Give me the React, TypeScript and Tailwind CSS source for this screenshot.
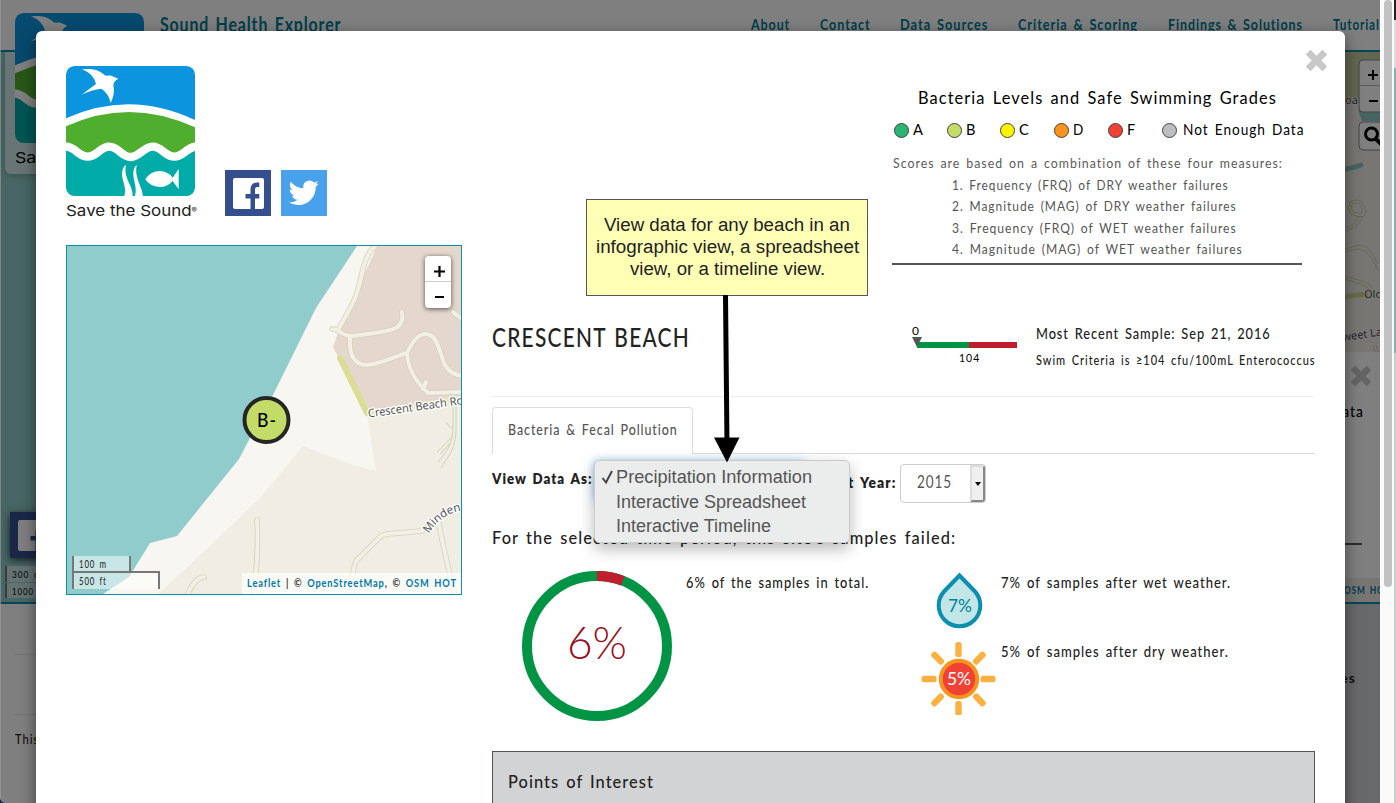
import { useLayoutEffect, useRef, type ReactNode } from "react";

const MAIN = "font-['Lato',sans-serif] tracking-[0.07em] [word-spacing:0.13em]";

/* One line of text, condensed or widened so that it fills its box. */
function Fit({ className, children }: { className: string; children: ReactNode }) {
  const outer = useRef<HTMLSpanElement>(null);
  const inner = useRef<HTMLSpanElement>(null);
  useLayoutEffect(() => {
    const o = outer.current;
    const i = inner.current;
    if (!o || !i || !i.offsetWidth) return;
    i.style.transform = `scaleX(${o.clientWidth / i.offsetWidth})`;
  }, []);
  return (
    <span ref={outer} className={`block shrink-0 whitespace-nowrap ${className}`}>
      <span ref={inner} className="inline-block origin-left">{children}</span>
    </span>
  );
}

const WAVE = "M-65 272C-38 272-27 242 0 242S38 272 65 272S103 242 130 242S167 273 194 273S233 242 260 242S298 272 325 272S363 242 390 242";

function Logo() {
  return (
    <svg className="block h-[130px] w-[129px]" viewBox="0 0 387 390">
      <defs>
        <clipPath id="badge"><rect width="387" height="390" rx="26" /></clipPath>
      </defs>
      <g clipPath="url(#badge)">
        <rect width="387" height="390" fill="#fff" />
        <path d="M0 0H387V162Q192 70 0 157Z" fill="#0d94de" />
        <path d="M0 181Q190 93 387 184V272H0Z" fill="#50ae2e" />
        <path d={`${WAVE}V390H-65Z`} fill="#00aba8" />
        <path d={WAVE} fill="none" stroke="#fff" strokeWidth="25" />
        <path d="M48 10Q90 6 109 22Q119 33 131 28L138 30L157 38Q143 44 142 58Q148 82 134 111Q128 82 106 68Q77 71 47 86Q66 72 90 54Q84 24 48 10Z" fill="#fff" />
        <path d="M180 296Q168 304 168 325C168 345 183 365 175 390H200C202 358 171 337 180 296ZM212 296Q201 306 202 326C203 346 214 365 207 390H231C229 360 204 337 212 296Z" fill="#fff" />
        <path d="M238 340Q253 315 284 315Q308 318 320 335L338 309V370L320 345Q304 363 282 363Q250 361 238 340Z" fill="#fff" />
      </g>
    </svg>
  );
}

function Facebook() {
  return (
    <svg className="block size-[46px]" viewBox="0 0 46 46">
      <path d="M0 0H46V46H0Z" fill="#354f8e" />
      <rect x="8" y="8" width="31" height="31" rx="2" fill="#fff" />
      <path d="M25.500 39V28.500H20.500V24H25.500V20C25.500 15 28 12.500 32 12.500H34.300V17H32.500C30.700 17 30 18 30 20V24H34.300V28.500H30V39Z" fill="#354f8e" />
    </svg>
  );
}

function Twitter() {
  return (
    <svg className="block size-[46px]" viewBox="0 0 46 46">
      <path d="M0 0H46V46H0Z" fill="#4aa1eb" />
      <path transform="translate(7.600 7.700) scale(1.260)" fill="#fff" d="M23.950 4.570a10 10 0 0 1-2.820.77 4.960 4.960 0 0 0 2.160-2.720 9.900 9.900 0 0 1-3.130 1.190 4.920 4.920 0 0 0-8.380 4.480A13.940 13.940 0 0 1 1.640 3.160a4.920 4.920 0 0 0 1.520 6.570 4.900 4.900 0 0 1-2.230-.61v.06a4.920 4.920 0 0 0 3.950 4.830 5 5 0 0 1-2.210.08 4.940 4.940 0 0 0 4.600 3.420A9.870 9.870 0 0 1 0 19.540a14 14 0 0 0 7.550 2.210c9.050 0 14-7.500 14-13.980l-.02-.64a9.900 9.900 0 0 0 2.420-2.560z" />
    </svg>
  );
}

const ROADS = [
  "M308 0C293 14 297 34 286 57L271 84",
  "M265 83L271 84Q276 90 286 90C303 87 318 87 329 82Q337 77 335 66",
  "M283 91C282 107 286 119 300 119C316 118 330 109 340 107C346 94 353 87 360 88C370 90 371 101 375 111C378 124 386 129 396 130",
  "M340 107C341 124 350 137 361 147L396 146M359 136L356 143",
  "M386 66L396 74",
  "M190 274Q192 300 187 350M137 331Q127 332 120 350",
  "M396 262L373 270L358 283L355 285L320 288Q314 289 310 294L290 314Q285 320 285 350M371 274Q376 300 388 350",
];

const LANES = "M386 160V184Q385 198 378 207L371 216M389 160V186Q388 202 381 211L374 222M386 190L370 206M384 196L373 208M379 176Q382 182 386 182";

function MapDrawing() {
  return (
    <svg className="block h-[348px] w-[394px]" viewBox="0 0 394 348">
      <defs><path id="minden" d="M362 288Q374 267 398 264" /></defs>
      <rect width="394" height="348" fill="#f7f6f1" />
      <path d="M236 200L286 219L309 225L300 167L394 145V348H91L141 302L195 250Z" fill="#efede4" />
      <path d="M310 0L295 34L272 84L266 101L300 169L394 150V0Z" fill="#e3d7ce" />
      <path d="M0 0H290L249 62L205 151L183 192L172 213L110 290L83 297L62 331L36 348H0Z" fill="#90cccb" />
      <path d="M300 168L394 152" stroke="#e6e6bb" strokeWidth="5" />
      <path d={LANES} fill="none" stroke="#d6d1b5" />
      {ROADS.map((d) => <path key={d} d={d} fill="none" stroke="#d6d1b5" strokeWidth="5.500" strokeLinecap="round" />)}
      {ROADS.map((d) => <path key={d} d={d} fill="none" stroke="#f1efe6" strokeWidth="4" strokeLinecap="round" />)}
      <path d="M273 112L300 167" stroke="#dade94" strokeWidth="6" strokeLinecap="round" />
      <g className="tracking-normal [word-spacing:0]" fontFamily="Noto Sans, sans-serif" fontSize="11.500" fill="#555" stroke="#fff" strokeWidth="2.500" paintOrder="stroke">
        <text transform="translate(301.500 171.500) rotate(-8)" textLength="96" lengthAdjust="spacingAndGlyphs">Crescent Beach Ro</text>
        <text><textPath href="#minden">Minden</textPath></text>
      </g>
      <circle cx="199.500" cy="174" r="22" fill="#c2dc67" stroke="#252525" strokeWidth="4" />
      <text x="190" y="181" textLength="20" lengthAdjust="spacingAndGlyphs" fontFamily="Lato, sans-serif" fontSize="20" fontWeight="500">B-</text>
    </svg>
  );
}

function Zoomer() {
  return (
    <div className="w-[26px] overflow-hidden rounded bg-white shadow-[0_1px_5px_rgba(0,0,0,0.65)]">
      <svg className="block" width="26" height="52" viewBox="0 0 26 52">
        <path d="M0 25.500H26" stroke="#ccc" />
        <path d="M9 15.500H20M14.500 10V21M10 41H19" stroke="#000" strokeWidth="2.200" />
      </svg>
    </div>
  );
}

function Cross({ className }: { className: string }) {
  return (
    <svg className={className} viewBox="0 0 22 22">
      <path d="M3 3L19 19M19 3L3 19" stroke="#c8c8c8" strokeWidth="6.500" />
    </svg>
  );
}

const NAV = [
  { label: "About", box: "w-[39px] mr-[30px]" },
  { label: "Contact", box: "w-[51px] mr-[29px]" },
  { label: "Data Sources", box: "w-[88px] mr-[30px]" },
  { label: "Criteria & Scoring", box: "w-[120px] mr-[30px]" },
  { label: "Findings & Solutions", box: "w-[135px] mr-[30px]" },
  { label: "Tutorials", box: "w-[53px]" },
];

function PageBehind() {
  return (
    <div className={`flex h-[803px] w-[1380px] flex-col overflow-hidden bg-white text-[#222] ${MAIN}`}>
      <header className="flex h-[52px] shrink-0 border-b-2 border-[#0c8fae] pl-[160px] pt-[11px] font-bold text-[#007c96]">
        <Fit className="w-[181px] text-[20px] leading-[27px]">Sound Health Explorer</Fit>
        <nav className="ml-[410px] flex text-[15px] leading-[27px]">
          {NAV.map((n) => <Fit key={n.label} className={n.box}>{n.label}</Fit>)}
        </nav>
      </header>
      <div className="flex h-[552px] shrink-0 justify-between border-b-2 border-[#0c8fae] bg-[#90cccb]">
        <div className="flex w-20 flex-col justify-end">
          <div className="ml-2.5 w-[46px] shadow-[0_2px_8px_rgba(0,0,0,0.7)]"><Facebook /></div>
          <div className="mb-1 ml-[5px] mt-2 w-[70px] text-[10px] font-medium">
            <div className="h-4 border-l-2 border-[#777] bg-white/50 pl-[5px] leading-4"><Fit className="w-[30px]">300 m</Fit></div>
            <div className="mt-px h-[15px] border-l-2 border-[#777] bg-white/50 pl-[5px] leading-4"><Fit className="w-[34px]">1000 ft</Fit></div>
          </div>
        </div>
        <div className="flex w-[40px] flex-col overflow-hidden bg-[#efede4]">
          <svg className="block h-[300px] w-[40px] shrink-0" viewBox="1340 52 40 300">
            <path d="M1340 52H1380V102H1340Z" fill="#c7cfa3" />
            <path d="M1358 110H1380V121H1362Z" fill="#8cc9c8" />
            <path d="M1340 170Q1354 168 1361 165" fill="none" stroke="#8cc9c8" strokeWidth="5" strokeLinecap="round" />
            <g fill="none" stroke="#d0ccad"><path d="M1350 202Q1360 197 1363 204Q1368 212 1364 216Q1355 218 1350 213Q1347 207 1350 202ZM1352 204Q1359 201 1361 206Q1364 213 1361 213Q1352 214 1351 208ZM1359 217Q1354 228 1340 228M1363 217Q1356 231 1340 232" /><path d="M1340 252C1365 240 1368 245 1378 264M1340 255C1362 244 1366 250 1376 265Q1376 272 1384 272M1340 275C1363 282 1367 280 1374 290M1340 278Q1366 284 1370 290" /></g>
            <path d="M1340 297L1368 294" stroke="#d3d88a" strokeWidth="5" />
            <g className="tracking-normal [word-spacing:0]" fontFamily="Noto Sans, sans-serif" fontSize="11" fill="#444" stroke="#fff" strokeWidth="1.500" paintOrder="stroke">
              <text x="1345" y="104">oa</text><text x="1364" y="298">Old</text>
              <text transform="translate(1343 341) rotate(-8)">weet La</text>
            </g>
            <path d="M1376 345L1378 352M1373 345L1375 352" stroke="#d0ccad" />
            <g><rect x="1359" y="60" width="26" height="52" rx="4" fill="#fff" stroke="#888" /><path d="M1359 85.500H1380" stroke="#bbb" /><path d="M1368 75H1378M1373 70V80M1369 101H1378" stroke="#000" strokeWidth="2" /></g>
            <g><rect x="1359" y="122" width="26" height="28" rx="4" fill="#fff" stroke="#888" /><circle cx="1371.500" cy="134" r="6" fill="none" stroke="#000" strokeWidth="3" /><path d="M1375.500 138.500L1382 145" stroke="#000" strokeWidth="4" /></g>
          </svg>
          <div className="h-[226px] shrink-0 bg-white pl-[10px] pt-[13px]">
            <Cross className="block size-[22px]" />
            <div className="-ml-[19px] mt-[14px] text-[15px] leading-5 font-medium text-black"><Fit className="w-[33px]">Data</Fit></div>
            <div className="-ml-2.5 mt-[122px] h-0.5 w-[22px] bg-[#555]" />
          </div>
          <div className="pl-[4px] text-[12px] leading-6 font-bold text-[#0078a8]"><Fit className="w-[46px]">OSM HOT</Fit></div>
        </div>
      </div>
      <div className="flex grow justify-between">
        <div className="w-[400px] pl-[15px] pt-[50px]">
          <div className="h-[60px] border-t border-[#e5e5e5]" />
          <div className="border-t border-[#e5e5e5] pt-3 text-[13px] leading-6 font-medium"><Fit className="w-[24px]">This</Fit></div>
        </div>
        <div className="w-[400px] bg-[#d1d3d4] pt-16 text-right text-[14px] leading-5 font-bold"><span className="mr-[24px]">Resources</span></div>
      </div>
    </div>
  );
}

const GRADES = [
  { label: "A", color: "bg-[#2bb573]", box: "w-[53px]", text: "w-[11px]" },
  { label: "B", color: "bg-[#c2dc67]", box: "w-[53px]", text: "w-[10px]" },
  { label: "C", color: "bg-[#fff200]", box: "w-[54px]", text: "w-[11px]" },
  { label: "D", color: "bg-[#f7941e]", box: "w-[54px]", text: "w-[11px]" },
  { label: "F", color: "bg-[#ef4136]", box: "w-[54px]", text: "w-[9px]" },
  { label: "Not Enough Data", color: "bg-[#bcbec0]", box: "w-[145px]", text: "ml-[2px] w-[121px]" },
];

const MEASURES = [
  { text: "1. Frequency (FRQ) of DRY weather failures", box: "w-[277px]" },
  { text: "2. Magnitude (MAG) of DRY weather failures", box: "w-[285px]" },
  { text: "3. Frequency (FRQ) of WET weather failures", box: "w-[285px]" },
  { text: "4. Magnitude (MAG) of WET weather failures", box: "w-[291px]" },
];

const RAYS = [0, 45, 90, 135, 180, 225, 270, 315];

function Modal() {
  return (
    <div className={`relative flex h-[790px] w-[1309px] rounded-md bg-white px-[30px] pt-[35px] text-[#222] shadow-[0_5px_15px_rgba(0,0,0,0.5)] ${MAIN}`}>
      <Cross className="absolute right-[17px] top-[18px] size-[23px]" />
      <section className="w-[396px] shrink-0">
        <div className="flex h-[179px]">
          <div className="w-[130px]">
            <Logo />
            <Fit className="w-[131px] font-['Inter',sans-serif] text-[15px] leading-[29px] tracking-normal [word-spacing:0]">Save the Sound<sup className="text-[7px]">®</sup></Fit>
          </div>
          <div className="ml-[29px] mt-[104px] flex gap-2.5"><Facebook /><Twitter /></div>
        </div>
        <div className="relative h-[350px] border border-[#0c8fae]">
          <MapDrawing />
          <div className="absolute right-[10px] top-[10px]"><Zoomer /></div>
          <div className="absolute bottom-[5px] left-[5px] text-[11px] font-medium text-[#333]">
            <div className="w-[59px] border-x-2 border-[#777] bg-white/50 pl-[5px] leading-[15px]"><Fit className="w-[28px]">100 m</Fit></div>
            <div className="w-[88px] border-x-2 border-t-2 border-[#777] bg-white/50 pl-[5px] leading-4"><Fit className="w-[28px]">500 ft</Fit></div>
          </div>
          <div className="absolute bottom-0 right-0 flex h-[21px] w-[219px] bg-white/70 pl-[5px] text-[12px] leading-5 font-bold text-[#0078a8]">
            <Fit className="w-[210px]">Leaflet <span className="text-[#333]">| ©</span> OpenStreetMap<span className="text-[#333]">, ©</span> OSM HOT</Fit>
          </div>
        </div>
      </section>

      <section className="ml-[30px] w-[823px] shrink-0">
        <div className="ml-[400px] h-[199px] w-[410px] border-b-2 border-[#555] pt-[22px] text-black">
          <Fit className="ml-[26px] w-[359px] text-[17px] leading-5">Bacteria Levels and Safe Swimming Grades</Fit>
          <div className="ml-0.5 mt-3 flex h-5 items-center">
            {GRADES.map((g) => (
              <div key={g.label} className={`flex shrink-0 items-center gap-1 ${g.box}`}>
                <i className={`size-[15px] shrink-0 rounded-full border border-[#444] ${g.color}`} />
                <Fit className={`-mt-[2px] text-[16px] leading-5 ${g.text}`}>{g.label}</Fit>
              </div>
            ))}
          </div>
          <Fit className="ml-px mt-[13px] w-[390px] text-[14px] leading-5 text-[#5a5a5a]">Scores are based on a combination of these four measures:</Fit>
          <div className="ml-[60px] mt-px text-[14px] leading-[21.400px] text-[#555]">
            {MEASURES.map((m) => <Fit key={m.text} className={m.box}>{m.text}</Fit>)}
          </div>
        </div>

        <div className="flex h-[131px]">
          <Fit className="mt-[56px] w-[198px] text-[27px] leading-8 font-medium tracking-[0.06em]">CRESCENT BEACH</Fit>
          <div className="ml-[222px] mt-[60px] w-[105px] text-[12px] leading-3 text-black">
            <Fit className="w-[8px]">0</Fit>
            <svg className="block h-[13px] w-[105px]" viewBox="0 0 105 13">
              <path d="M5 5H57V11H5Z" fill="#009444" /><path d="M57 5H105V11H57Z" fill="#be1e2d" /><path d="M0 0H10L5 10Z" fill="#555" />
            </svg>
            <Fit className="ml-[47px] mt-[2px] w-[21px]">104</Fit>
          </div>
          <div className="ml-[19px] mt-[58px] font-medium">
            <Fit className="w-[235px] text-[15.500px] leading-5">Most Recent Sample: Sep 21, 2016</Fit>
            <Fit className="mt-[8px] w-[280px] text-[12.500px] leading-5">Swim Criteria is ≥104 cfu/100mL Enterococcus</Fit>
          </div>
        </div>

        <div className="flex h-[58px] border-t border-[#eee] pt-2.5">
          <div className="h-[47px] w-[201px] rounded-t border border-b-0 border-[#ddd] pl-[15px] pt-[11px]">
            <Fit className="w-[170px] text-[15px] leading-5 font-medium text-[#555]">Bacteria &amp; Fecal Pollution</Fit>
          </div>
          <div className="grow border-b border-[#ddd]" />
        </div>

        <div className="flex pt-[9px] font-extrabold">
          <Fit className="mt-[5px] w-[100px] text-[15px] leading-5">View Data As:</Fit>
          <div className="ml-[2px] mt-[-2px] h-10 w-[211px] rounded border border-[#66afe9] shadow-[0_0_8px_rgba(102,175,233,0.7)]" />
          <Fit className="ml-[3px] mt-[9px] w-[40px] text-[15px] leading-5">Selec</Fit>
          <Fit className="mt-[9px] w-[48px] text-[15px] leading-5">t Year:</Fit>
          <div className="ml-[4px] mt-[1px] flex h-[39px] w-[86px] rounded border border-[#ccc] pl-4 font-normal">
            <Fit className="w-[35px] text-[17px] leading-[34px] text-[#555]">2015</Fit>
            <span className="ml-[18px] flex w-[15px] items-center justify-center rounded-r-[3px] border-2 border-b-[#888] border-l-[#ddd] border-r-[#888] border-t-[#ddd] bg-[#efefef]">
              <svg width="6" height="4" viewBox="0 0 6 4" className="shrink-0"><path d="M0 0H6L3 4Z" /></svg>
            </span>
          </div>
        </div>

        <Fit className="mt-[25px] w-[464px] text-[17px] leading-5 font-medium">For the selected time period, this site's samples failed:</Fit>

        <div className="flex h-[203px] pt-[23px] font-medium">
          <svg className="ml-[30px] block size-[150px] shrink-0" viewBox="0 0 150 150">
            <circle cx="75" cy="75" r="70" fill="none" stroke="#009444" strokeWidth="10" />
            <circle cx="75" cy="75" r="70" fill="none" stroke="#be1e2d" strokeWidth="10" pathLength="100" strokeDasharray="6 94" transform="rotate(-90 75 75)" />
            <text x="45" y="88" textLength="60" lengthAdjust="spacingAndGlyphs" fontFamily="Lato, sans-serif" fontSize="45" fontWeight="300" letterSpacing="0" fill="#980d20">6%</text>
          </svg>
          <Fit className="ml-[14px] mt-px w-[183px] text-[15px] leading-5">6% of the samples in total.</Fit>
          <div className="ml-[52px] w-[76px] shrink-0">
            <svg className="block h-[144px] w-[76px]" viewBox="921 571 76 144">
              <path d="M959.500 575.500L974.500 591A20.800 20.800 0 1 1 944.500 591Z" fill="#c2e5e7" stroke="#0c8fae" strokeWidth="4" />
              <text x="948" y="611.500" textLength="24" lengthAdjust="spacingAndGlyphs" fontSize="18" letterSpacing="0" fontWeight="400" fill="#008298">7%</text>
              {RAYS.map((a) => <rect key={a} x="955.300" y="642" width="6.400" height="15" rx="2.500" fill="#fbb040" transform={`rotate(${a} 958.500 679)`} />)}
              <circle cx="959" cy="679" r="18.200" fill="#ef4136" stroke="#f7941e" strokeWidth="4" />
              <text x="947" y="684.500" textLength="24" lengthAdjust="spacingAndGlyphs" fontSize="18" letterSpacing="0" fontWeight="400" fill="#fff">5%</text>
            </svg>
          </div>
          <div className="ml-1 mt-px text-[15px] leading-5">
            <Fit className="w-[230px]">7% of samples after wet weather.</Fit>
            <Fit className="mt-[49px] w-[228px]">5% of samples after dry weather.</Fit>
          </div>
        </div>

        <div className="h-24 border border-[#555] bg-[#d1d3d4] pl-[15px] pt-[19px]">
          <Fit className="w-[146px] text-[18px] leading-5 font-medium">Points of Interest</Fit>
        </div>
      </section>
    </div>
  );
}

export default function App() {
  return (
    <div className="relative flex h-[803px] w-[1396px] overflow-hidden bg-[#132644]">
      <div className="relative w-[1380px] shrink-0 overflow-hidden rounded-bl-md">
        <PageBehind />
        <div className={`absolute left-[5px] top-[52px] h-[122px] w-[170px] rounded-b-md bg-white/60 shadow-[0_2px_6px_rgba(0,0,0,0.2)] ${MAIN}`}>
          <div className="-mt-[39px] ml-2.5">
            <Logo />
            <Fit className="w-[131px] font-['Inter',sans-serif] text-[15px] leading-[29px] tracking-normal [word-spacing:0]">Save the Sound</Fit>
          </div>
        </div>
        <div className="absolute inset-0 border-l border-[#a0a0a0]/60 bg-black/50" />
        <div className="absolute left-[36px] top-[31px]"><Modal /></div>
      </div>
      <div className="w-3.5 shrink-0 bg-[#fafafa] pl-1"><div className="h-[587px] w-2 rounded-full bg-[#c2c2c2]" /></div>
      <div className="w-0.5 bg-[#c9cccc]">
        <div className="h-5 bg-[#222]" /><div className="h-12 bg-[#ddd]" /><div className="h-[285px] bg-[#87aeb0]" />
      </div>

      <div className="absolute left-[594px] top-[460px] h-[83px] w-[256px] rounded-[5px] border border-[#ccc] bg-[#ebecec] pl-[21px] pt-1 font-['Liberation_Sans',sans-serif] text-[18px] leading-[24.500px] text-[#555] shadow-[0_6px_16px_rgba(0,0,0,0.28)]">
        <svg className="absolute left-[6px] top-[8px]" width="14" height="17" viewBox="0 0 14 17"><path d="M1.500 9L5 13.500L11 2" fill="none" stroke="#444" strokeWidth="2" /></svg>
        <Fit className="w-[196px]">Precipitation Information</Fit>
        <Fit className="w-[190px]">Interactive Spreadsheet</Fit>
        <Fit className="w-[155px]">Interactive Timeline</Fit>
      </div>

      <div className="absolute left-[586px] top-[199px] flex h-[97px] w-[282px] flex-col items-center border border-[#555] bg-[#ffffb5] pt-[14px] font-['Liberation_Sans',sans-serif] text-[18px] leading-[22px] text-[#222]">
        <Fit className="w-[246px]">View data for any beach in an</Fit>
        <Fit className="w-[263px]">infographic view, a spreadsheet</Fit>
        <Fit className="w-[195px]">view, or a timeline view.</Fit>
      </div>
      <svg className="absolute left-[714px] top-[295px]" width="26" height="168" viewBox="0 0 26 168">
        <path d="M11.500 0L13 150" stroke="#000" strokeWidth="5" /><path d="M0 142.500H25.500L13 167.500Z" />
      </svg>
    </div>
  );
}
